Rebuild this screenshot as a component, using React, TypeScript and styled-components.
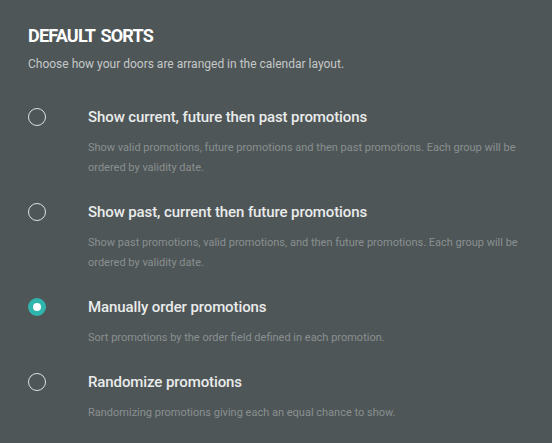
import React, { useState } from "react";
import styled, { createGlobalStyle } from "styled-components";

const GlobalStyle = createGlobalStyle`
  html, body {
    margin: 0;
    padding: 0;
    background: #4f5657;
  }
  body {
    font-family: Roboto, "Liberation Sans", Arial, sans-serif;
  }
`;

interface SortOption {
  id: string;
  title: string;
  description: string;
}

const options: SortOption[] = [
  {
    id: "current",
    title: "Show current, future then past promotions",
    description:
      "Show valid promotions, future promotions and then past promotions. Each group will be ordered by validity date.",
  },
  {
    id: "past",
    title: "Show past, current then future promotions",
    description:
      "Show past promotions, valid promotions, and then future promotions. Each group will be ordered by validity date.",
  },
  {
    id: "manual",
    title: "Manually order promotions",
    description: "Sort promotions by the order field defined in each promotion.",
  },
  {
    id: "random",
    title: "Randomize promotions",
    description: "Randomizing promotions giving each an equal chance to show.",
  },
];

const Panel = styled("section")`
  background: #4f5657;
  width: 552px;
  height: 443px;
  box-sizing: border-box;
  padding: 26px 28px 0 28px;
  overflow: hidden;
`;

const Heading = styled("h1")`
  margin: 0;
  font-size: 18px;
  line-height: 20px;
  font-weight: 700;
  color: #ffffff;
  text-transform: uppercase;
  letter-spacing: -0.8px;
  word-spacing: 2px;
`;

const Subtitle = styled("p")`
  margin: 10px 0 0;
  font-size: 12px;
  line-height: 16px;
  color: #c4c8c8;
`;

const OptionList = styled("div")`
  display: flex;
  flex-direction: column;
  gap: 24px;
  margin-top: 35px;
`;

const OptionRow = styled("label")`
  display: grid;
  grid-template-columns: 60px 1fr;
  cursor: pointer;
`;

const RadioCell = styled("div")`
  height: 20px;
  display: flex;
  align-items: center;
`;

const Radio = styled("span")<{ $checked: boolean }>`
  width: 18px;
  height: 18px;
  box-sizing: border-box;
  border-radius: 50%;
  border: ${(p) => (p.$checked ? "5px solid #30b5ae" : "1.3px solid #dfe1e1")};
  background: ${(p) => (p.$checked ? "#ffffff" : "transparent")};
`;

const OptionText = styled("div")`
  display: flex;
  flex-direction: column;
`;

const OptionTitle = styled("div")`
  font-size: 15px;
  line-height: 20px;
  font-weight: 500;
  letter-spacing: -0.1px;
  color: #e9ebeb;
`;

const OptionDescription = styled("div")`
  margin-top: 11px;
  font-size: 11px;
  line-height: 20px;
  color: #899091;
`;

const App = () => {
  const [selected, setSelected] = useState("manual");
  return (
    <Panel>
      <GlobalStyle />
      <Heading>Default sorts</Heading>
      <Subtitle>Choose how your doors are arranged in the calendar layout.</Subtitle>
      <OptionList>
        {options.map((o) => (
          <OptionRow key={o.id} onClick={() => setSelected(o.id)}>
            <RadioCell>
              <Radio $checked={selected === o.id} />
            </RadioCell>
            <OptionText>
              <OptionTitle>{o.title}</OptionTitle>
              <OptionDescription>{o.description}</OptionDescription>
            </OptionText>
          </OptionRow>
        ))}
      </OptionList>
    </Panel>
  );
};

export default App;
